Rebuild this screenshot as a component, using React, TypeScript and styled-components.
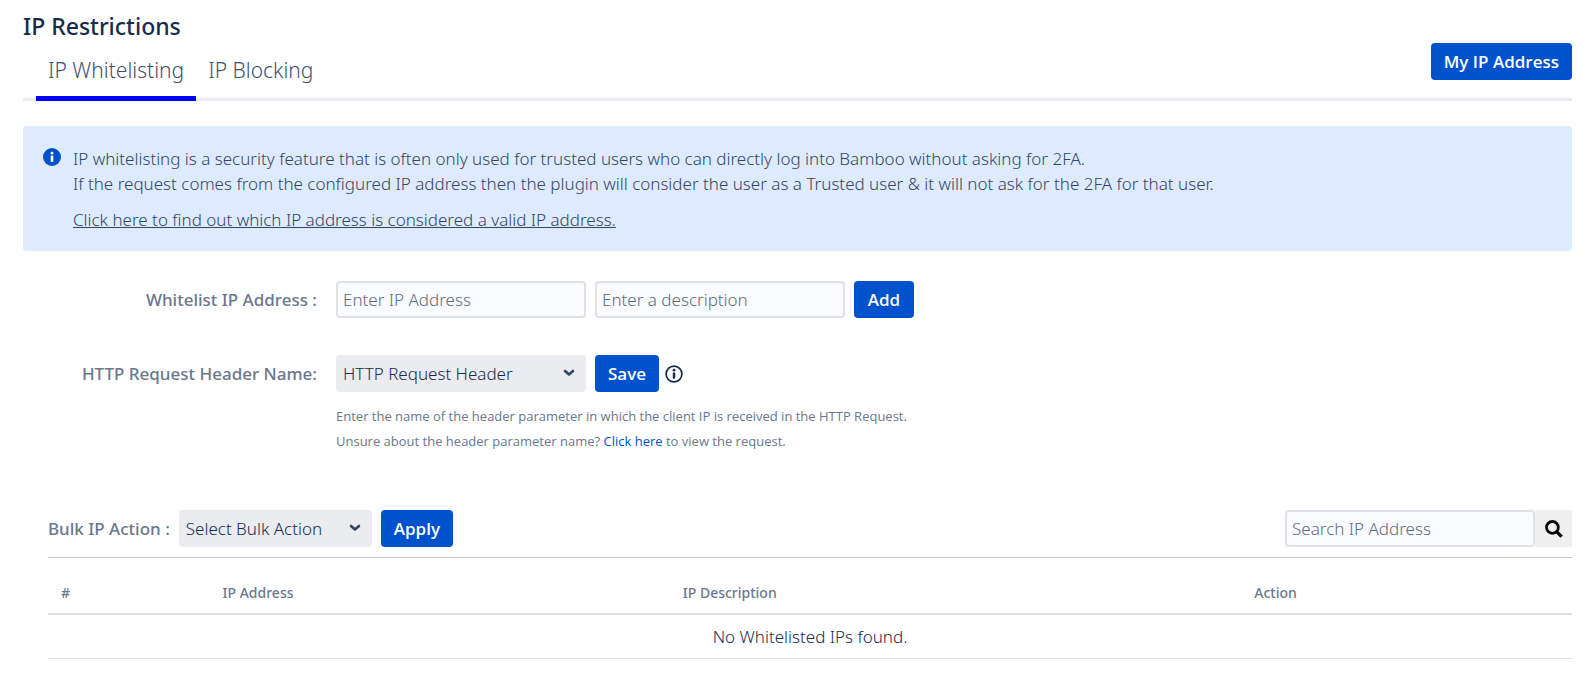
import React, { useState } from 'react';
import styled, { createGlobalStyle, css } from 'styled-components';

const GlobalStyle = createGlobalStyle`
  *, *::before, *::after { box-sizing: border-box; }
  body {
    margin: 0;
    background: #fff;
    color: #172b4d;
    font: 300 17px/25px 'Noto Sans', 'Open Sans', sans-serif;
  }
  button, input, select { font: inherit; margin: 0; }
`;

const Page = styled.main`
  padding: 9px 18px 16px 23px;
`;

const Title = styled.h1`
  margin: 0;
  font-size: 23px;
  line-height: 34px;
  font-weight: 500;
`;

const TabBar = styled.div`
  display: flex;
  align-items: stretch;
  justify-content: space-between;
  height: 58px;
  box-shadow: inset 0 -3px #ebecf0;
`;

const TabList = styled.nav`
  display: flex;
  padding-left: 13px;
`;

const Tab = styled.a<{ $active?: boolean }>`
  display: block;
  padding: 15px 12px 0;
  border-bottom: 5px solid ${(p) => (p.$active ? '#0000ff' : 'transparent')};
  color: #42526e;
  font-size: 21px;
  line-height: 25px;
  text-decoration: none;
`;

const control = css`
  height: 37px;
  border-radius: 4px;
`;

const Button = styled.button`
  ${control}
  min-width: 60px;
  padding: 0 13px;
  border: 0;
  background: #0052cc;
  color: #fff;
  font-family: 'Open Sans', 'Noto Sans', sans-serif;
  font-weight: 600;
  white-space: nowrap;
  cursor: pointer;
`;

const Banner = styled.section`
  display: flex;
  gap: 12px;
  margin-top: 25px;
  padding: 20px 20px 19px;
  border-radius: 4px;
  background: #deebff;
  color: #344563;

  svg { flex: none; margin-top: 2px; }
  p { margin: 0 0 11px; }
  p:last-child { margin: 0; }
  a { color: inherit; text-decoration: underline; }
`;

const FormRow = styled.div`
  display: grid;
  grid-template-columns: 294px 1fr;
  column-gap: 19px;
  align-items: center;
  margin-top: ${(p: { $gap: number }) => p.$gap}px;
`;

const Label = styled.label`
  color: #6b778c;
  font-weight: 500;
  text-align: right;
  white-space: nowrap;
`;

const Controls = styled.div`
  display: flex;
  align-items: center;
  gap: 9px;
`;

const TextInput = styled.input`
  ${control}
  width: 250px;
  padding: 0 5px;
  border: 2px solid #dfe1e6;
  background: #fafbfc;
  color: #172b4d;

  &::placeholder { color: #5e6c84; opacity: 1; }
`;

const SelectBox = styled.span<{ $width: number }>`
  position: relative;
  display: block;
  width: ${(p) => p.$width}px;

  svg {
    position: absolute;
    right: 11px;
    top: 14px;
    pointer-events: none;
  }
`;

const Select = styled.select`
  ${control}
  display: block;
  width: 100%;
  padding: 0 28px 0 7px;
  border: 0;
  appearance: none;
  background: #ebecf0;
  color: #172b4d;
`;

const ButtonWithInfo = styled.div`
  display: flex;
  align-items: center;
  gap: 6px;
`;

const IconButton = styled.button`
  display: flex;
  padding: 0;
  border: 0;
  background: none;
  color: #172b4d;
`;

const Help = styled.p`
  grid-column: 2;
  margin: 12px 0 0;
  color: #6b778c;
  font-family: 'Open Sans', 'Noto Sans', sans-serif;
  font-size: 13px;
  font-weight: 400;

  a { color: #0052cc; text-decoration: none; }
`;

const ListSection = styled.section`
  margin: 56px 0 0 25px;
`;

const Toolbar = styled.div`
  display: flex;
  align-items: center;
  justify-content: space-between;
  padding-bottom: 10px;
  border-bottom: 1px solid #c1c7d0;
`;

const SearchForm = styled.form`
  display: flex;
`;

const SearchButton = styled.button`
  display: flex;
  align-items: center;
  justify-content: center;
  width: 37px;
  padding: 0;
  border: 0;
  background: #efefef;
  color: #000;
`;

const Table = styled.table`
  width: 100%;
  table-layout: fixed;
  border-collapse: collapse;

  th {
    height: 56px;
    padding: 13px 13px 0;
    border-bottom: 2px solid #dfe1e6;
    color: #6b778c;
    font-size: 14px;
    font-weight: 500;
    text-align: left;
  }
  td {
    height: 44px;
    padding: 0 13px;
    border-bottom: 1px solid #dfe1e6;
    text-align: center;
  }
`;

const Chevron = () => (
  <svg width="12" height="8" viewBox="0 0 12 8" fill="none" aria-hidden="true">
    <path d="M2 2l4 3.5L10 2" stroke="#344563" strokeWidth="2.6" strokeLinecap="round" strokeLinejoin="round" />
  </svg>
);

const InfoFilled = () => (
  <svg width="18" height="18" viewBox="0 0 18 18" aria-hidden="true">
    <circle cx="9" cy="9" r="9" fill="#0052cc" />
    <circle cx="9" cy="5.2" r="1.4" fill="#fff" />
    <rect x="7.7" y="7.5" width="2.6" height="6.4" rx="0.8" fill="#fff" />
  </svg>
);

const InfoOutline = () => (
  <svg width="18" height="18" viewBox="0 0 18 18" fill="none" aria-hidden="true">
    <circle cx="9" cy="9" r="7.9" stroke="currentColor" strokeWidth="1.7" />
    <circle cx="9" cy="5.2" r="1.4" fill="currentColor" />
    <rect x="7.8" y="7.5" width="2.4" height="6.2" rx="0.6" fill="currentColor" />
  </svg>
);

const SearchIcon = () => (
  <svg width="18" height="18" viewBox="0 0 18 18" fill="none" stroke="currentColor" aria-hidden="true">
    <circle cx="7.4" cy="7.4" r="5.9" strokeWidth="2.8" />
    <path d="M11.6 11.6l5 5" strokeWidth="3.2" />
  </svg>
);

const Dropdown = ({ id, width, option }: { id: string; width: number; option: string }) => (
  <SelectBox $width={width}>
    <Select id={id}>
      <option>{option}</option>
    </Select>
    <Chevron />
  </SelectBox>
);

export default function App() {
  const [query, setQuery] = useState('');

  return (
    <Page>
      <GlobalStyle />
      <Title>IP Restrictions</Title>
      <TabBar>
        <TabList>
          <Tab href="#whitelisting" $active aria-current="page">IP Whitelisting</Tab>
          <Tab href="#blocking">IP Blocking</Tab>
        </TabList>
        <Button type="button">My IP Address</Button>
      </TabBar>

      <Banner>
        <InfoFilled />
        <div>
          <p>
            IP whitelisting is a security feature that is often only used for trusted users who can directly log into Bamboo without asking for 2FA.
            <br />
            If the request comes from the configured IP address then the plugin will consider the user as a Trusted user &amp; it will not ask for the 2FA for that user.
          </p>
          <p>
            <a href="#valid-ip">Click here to find out which IP address is considered a valid IP address.</a>
          </p>
        </div>
      </Banner>

      <FormRow $gap={30}>
        <Label htmlFor="ip">Whitelist IP Address :</Label>
        <Controls>
          <TextInput id="ip" placeholder="Enter IP Address" />
          <TextInput aria-label="Description" placeholder="Enter a description" />
          <Button type="button">Add</Button>
        </Controls>
      </FormRow>

      <FormRow $gap={37}>
        <Label htmlFor="header">HTTP Request Header Name:</Label>
        <Controls>
          <Dropdown id="header" width={250} option="HTTP Request Header" />
          <ButtonWithInfo>
            <Button type="button">Save</Button>
            <IconButton type="button" aria-label="More information">
              <InfoOutline />
            </IconButton>
          </ButtonWithInfo>
        </Controls>
        <Help>
          Enter the name of the header parameter in which the client IP is received in the HTTP Request.
          <br />
          Unsure about the header parameter name? <a href="#request">Click here</a> to view the request.
        </Help>
      </FormRow>

      <ListSection>
        <Toolbar>
          <Controls>
            <Label htmlFor="bulk">Bulk IP Action :</Label>
            <Dropdown id="bulk" width={193} option="Select Bulk Action" />
            <Button type="button">Apply</Button>
          </Controls>
          <SearchForm onSubmit={(e) => e.preventDefault()}>
            <TextInput
              aria-label="Search IP Address"
              placeholder="Search IP Address"
              value={query}
              onChange={(e) => setQuery(e.target.value)}
            />
            <SearchButton type="submit" aria-label="Search">
              <SearchIcon />
            </SearchButton>
          </SearchForm>
        </Toolbar>
        <Table>
          <colgroup>
            <col style={{ width: '10.6%' }} />
            <col style={{ width: '30.2%' }} />
            <col style={{ width: '37.5%' }} />
            <col />
          </colgroup>
          <thead>
            <tr>
              <th scope="col">#</th>
              <th scope="col">IP Address</th>
              <th scope="col">IP Description</th>
              <th scope="col">Action</th>
            </tr>
          </thead>
          <tbody>
            <tr>
              <td colSpan={4}>No Whitelisted IPs found.</td>
            </tr>
          </tbody>
        </Table>
      </ListSection>
    </Page>
  );
}
